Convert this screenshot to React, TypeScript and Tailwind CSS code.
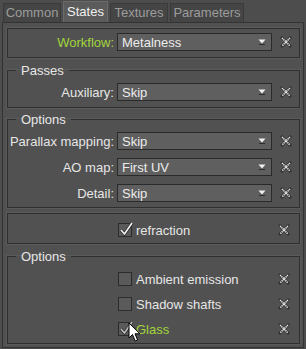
import React from "react";

const green = "text-[#a2d63c]";

const XIcon = () => (
  <svg width="12" height="12" viewBox="0 0 12 12">
    <path d="M2 2L10 10M10 2L2 10" stroke="#333333" strokeWidth="3" strokeLinecap="square" />
    <path d="M2 2L10 10M10 2L2 10" stroke="#e8e8e8" strokeWidth="1.6" strokeDasharray="1.3 0.6" />
  </svg>
);

const Clear = () => (
  <div className="flex-1 flex justify-center items-center pl-[1px]">
    <XIcon />
  </div>
);

const Dropdown = ({ value }: { value: string }) => (
  <div className="w-[155px] h-[18px] flex items-center justify-between bg-[#5f5f5f] border border-[#2a2a2a] pl-[4px] pr-[5px] text-[#ececec] leading-none">
    <span>{value}</span>
    <svg width="8" height="6" viewBox="0 0 8 6">
      <path d="M0.5 0.5H7.5L4 4.5Z" fill="#f2f2f2" />
      <path d="M1 5.5H7" stroke="#2e2e2e" strokeWidth="1" />
    </svg>
  </div>
);

const SelectRow = ({ label, value, hl }: { label: string; value: string; hl?: boolean }) => (
  <div className="flex items-center h-[18px]">
    <div className={`w-[109px] pr-[3px] text-right leading-none ${hl ? green : "text-[#e6e6e6]"}`}>{label}</div>
    <Dropdown value={value} />
    <Clear />
  </div>
);

const Check = ({ checked, dim }: { checked?: boolean; dim?: boolean }) => (
  <div className="relative w-[14px] h-[14px] bg-[#5a5a5a] border border-[#2c2c2c]">
    {checked && (
      <svg className="absolute left-[0px] top-[-3px]" width="15" height="16" viewBox="0 0 15 16">
        <path d="M2 9L5.5 13L13 2" fill="none" stroke="#2a2a2a" strokeWidth="3" />
        <path d="M2 9L5.5 13L13 2" fill="none" stroke={dim ? "#bdbdbd" : "#f4f4f4"} strokeWidth="1.6" />
      </svg>
    )}
  </div>
);

const CheckRow = ({ label, checked, hl, dim }: { label: string; checked?: boolean; hl?: boolean; dim?: boolean }) => (
  <div className="flex items-center h-[18px]">
    <div className="w-[110px]" />
    <Check checked={checked} dim={dim} />
    <div className={`w-[136px] pl-[4px] leading-none ${hl ? green : "text-[#e6e6e6]"}`}>{label}</div>
    <Clear />
  </div>
);

const Box = ({ children, className }: { children: React.ReactNode; className?: string }) => (
  <div className={`border border-[#2f2f2f] shadow-[0_0_0_1px_#5a5a5a] ${className ?? ""}`}>{children}</div>
);

const Group = ({ title, children, className }: { title: string; children: React.ReactNode; className?: string }) => (
  <fieldset className={`border border-[#2f2f2f] shadow-[0_0_0_1px_#5a5a5a] m-0 p-0 ${className ?? ""}`}>
    <legend className="ml-[8px] px-[5px] leading-[15px] text-[#e6e6e6]">{title}</legend>
    {children}
  </fieldset>
);

const tabs = [
  { name: "Common", w: "w-[58px]" },
  { name: "States", w: "w-[45px]", active: true },
  { name: "Textures", w: "w-[58px]" },
  { name: "Parameters", w: "w-[74px]" },
];

export default function App() {
  return (
    <div className="relative w-[306px] h-[349px] bg-[#4d4d4d] font-['Liberation_Sans',Arial,sans-serif] text-[13px] overflow-hidden">
      <div className="flex gap-[2px] pl-[3px] h-[22px] items-end">
        {tabs.map((t) => (
          <div
            key={t.name}
            className={`${t.w} flex items-center justify-center border border-b-0 ${
              t.active
                ? "h-[21px] bg-[#5b5b5b] border-[#6a6a6a] text-[#f0f0f0]"
                : "h-[19px] bg-[#454545] border-[#3a3a3a] text-[#9c9c9c]"
            }`}
          >
            {t.name}
          </div>
        ))}
      </div>
      <div className="ml-[2px] w-[302px] h-[326px] border border-[#333333] bg-[#515151] pl-[4px] pr-[3px] pt-[5px]">
        <Box className="pt-[4px] pb-[6px]">
          <SelectRow label="Workflow:" value="Metalness" hl />
        </Box>
        <Group title="Passes" className="mt-[5px] pt-[5px] pb-[6px]">
          <SelectRow label="Auxiliary:" value="Skip" />
        </Group>
        <Group title="Options" className="mt-[4px] pt-[5px] pb-[5px]">
          <div className="flex flex-col gap-[8px]">
            <SelectRow label="Parallax mapping:" value="Skip" />
            <SelectRow label="AO map:" value="First UV" />
            <SelectRow label="Detail:" value="Skip" />
          </div>
        </Group>
        <Box className="mt-[5px] pt-[7px] pb-[4px]">
          <CheckRow label="refraction" checked />
        </Box>
        <Group title="Options" className="mt-[5px] pt-[6px] pb-[5px]">
          <div className="flex flex-col gap-[7px]">
            <CheckRow label="Ambient emission" />
            <CheckRow label="Shadow shafts" />
            <CheckRow label="Glass" checked hl dim />
          </div>
        </Group>
      </div>
      <svg className="absolute left-[128px] top-[322px]" width="13" height="21" viewBox="0 0 13 21">
        <path d="M1 1V16L4.5 12.5L7.2 19L9.6 18L7 11.8H12Z" fill="#ffffff" stroke="#000000" strokeWidth="1" strokeLinejoin="round" />
      </svg>
    </div>
  );
}
